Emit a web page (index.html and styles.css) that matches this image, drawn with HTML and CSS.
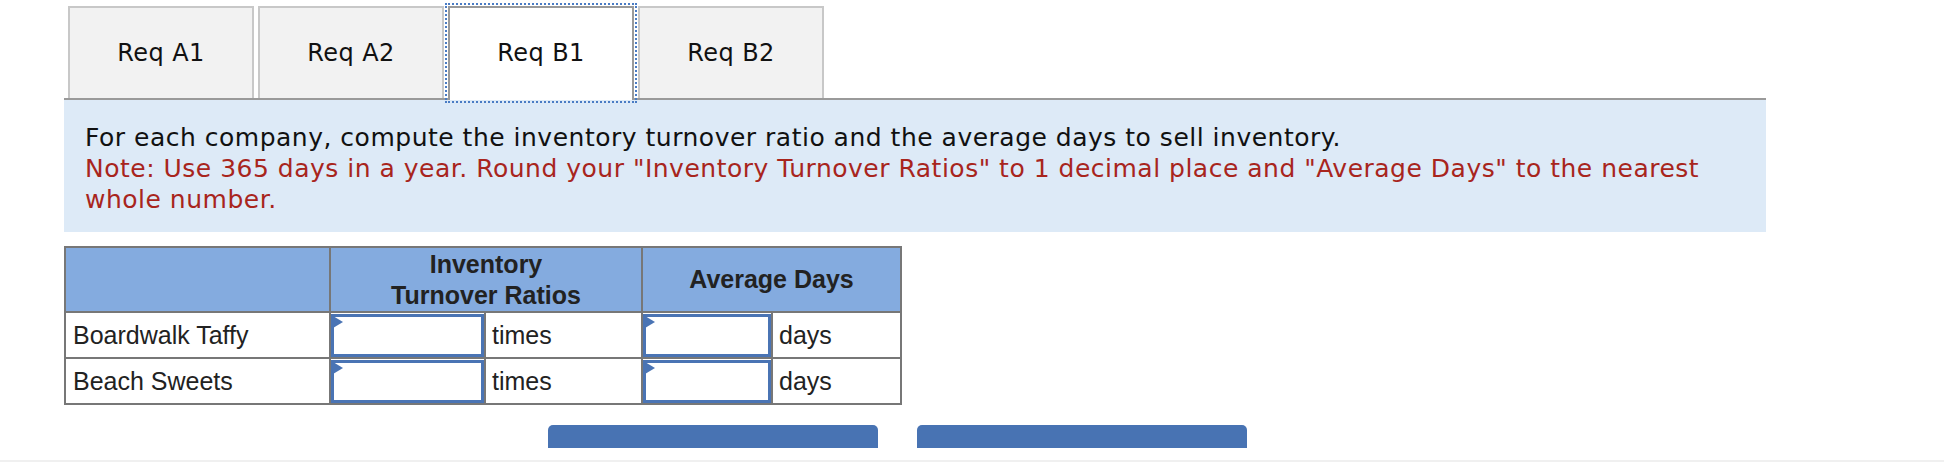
FILE: index.html
```html
<!DOCTYPE html>
<html lang="en">
<head>
    <meta charset="UTF-8">
    <meta name="viewport" content="width=device-width, initial-scale=1.0">
    <title>Req B1</title>
    <link rel="stylesheet" href="styles.css">
</head>
<body>
    <div class="page">
        <div class="wrap">
            <ul class="tabs">
                <li class="tab">Req A1</li>
                <li class="tab">Req A2</li>
                <li class="tab active">Req B1</li>
                <li class="tab">Req B2</li>
            </ul>

            <div class="question">
                <p>For each company, compute the inventory turnover ratio and the average days to sell inventory.</p>
                <p class="note">Note: Use 365 days in a year. Round your "Inventory Turnover Ratios" to 1 decimal place and "Average Days" to the nearest whole number.</p>
            </div>

            <table class="answer">
                <colgroup>
                    <col class="c-name">
                    <col class="c-input1">
                    <col class="c-unit1">
                    <col class="c-input2">
                    <col class="c-unit2">
                </colgroup>
                <thead>
                    <tr>
                        <th></th>
                        <th colspan="2">Inventory<br>Turnover Ratios</th>
                        <th colspan="2">Average Days</th>
                    </tr>
                </thead>
                <tbody>
                    <tr>
                        <td class="name">Boardwalk Taffy</td>
                        <td class="cell"><div class="field"></div></td>
                        <td class="unit">times</td>
                        <td class="cell"><div class="field"></div></td>
                        <td class="unit">days</td>
                    </tr>
                    <tr>
                        <td class="name">Beach Sweets</td>
                        <td class="cell"><div class="field"></div></td>
                        <td class="unit">times</td>
                        <td class="cell"><div class="field"></div></td>
                        <td class="unit">days</td>
                    </tr>
                </tbody>
            </table>
        </div>

        <div class="nav">
            <div class="btn">&lt; Req A2</div>
            <div class="btn">Req B2 &gt;</div>
        </div>
    </div>
    <div class="footer-line"></div>
</body>
</html>
```

FILE: styles.css
```css
*{
    margin: 0;
    padding: 0;
    box-sizing: border-box;
}

body{
    background: #fff;
    font-family: "DejaVu Sans", Verdana, sans-serif;
    color: #111;
}

li{
    list-style: none;
}

.page{
    height: 448px;
    overflow: hidden;
}

.wrap{
    margin-left: 64px;
    width: 1702px;
}

.tabs{
    display: flex;
    padding: 6px 0 0 4px;
    border-bottom: 2px solid #9a9a9a;
    height: 100px;
}

.tab{
    width: 186px;
    height: 92px;
    margin-right: 4px;
    background: #f2f2f2;
    border: 2px solid #c8c8c8;
    border-bottom: none;
    display: flex;
    align-items: center;
    justify-content: center;
    font-size: 24px;
    letter-spacing: 0.4px;
}

.tab.active{
    position: relative;
    background: #fff;
    border-color: #9a9a9a;
    height: 94px;
    padding-bottom: 2px;
    outline: 2px dotted #4a7cc4;
    outline-offset: 1px;
}

.question{
    background: #ddeaf7;
    padding: 22px 20px 17px 21px;
    font-size: 25px;
    letter-spacing: 0.5px;
    line-height: 31px;
}

.note{
    color: #a8251d;
}

.answer{
    margin-top: 14px;
    border-collapse: collapse;
    table-layout: fixed;
    border: 2px solid #777;
    font-family: "Liberation Sans", Arial, sans-serif;
    font-size: 25px;
    color: #222;
}

.c-name{ width: 265px; }
.c-input1{ width: 155px; }
.c-unit1{ width: 157px; }
.c-input2{ width: 130px; }
.c-unit2{ width: 129px; }

.answer th{
    background: #84abdf;
    border: 2px solid #777;
    height: 65px;
    font-weight: bold;
    line-height: 31px;
    text-align: center;
}

.answer td{
    border: 2px solid #777;
    height: 46px;
}

.answer .name{
    padding-left: 7px;
}

.answer .unit{
    padding-left: 6px;
}

.answer .cell{
    padding: 0;
}

.field{
    position: relative;
    height: 43px;
    border: 3px solid #4a74b4;
    background: #fff;
}

.field::before{
    content: "";
    position: absolute;
    left: -1px;
    top: -1px;
    border-left: 10px solid #4a74b4;
    border-top: 6px solid transparent;
    border-bottom: 6px solid transparent;
}

.nav{
    display: flex;
    gap: 39px;
    margin: 20px 0 0 548px;
}

.btn{
    width: 330px;
    height: 60px;
    background: #4873b3;
    border-radius: 5px 5px 0 0;
    color: #fff;
    font-size: 24px;
    padding-top: 19px;
    text-align: center;
}

.footer-line{
    margin-top: 12px;
    height: 2px;
    background: #f0f0f0;
}
```
